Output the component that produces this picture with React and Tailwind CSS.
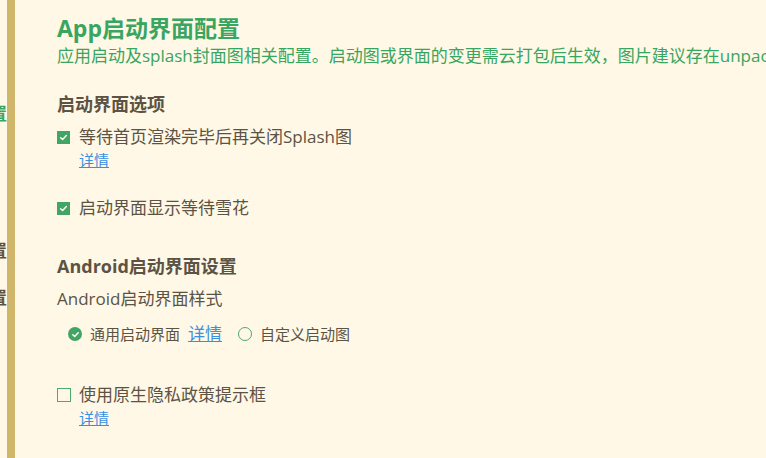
import React from 'react';

const font = { fontFamily: '"Open Sans", "Noto Sans CJK SC", sans-serif' };

function CheckBox({ checked }) {
  if (checked) {
    return (
      <span className="flex h-[13px] w-[13px] shrink-0 items-center justify-center bg-[#43a564]">
        <svg width="9" height="9" viewBox="0 0 10 10" fill="none">
          <path d="M1.8 5.2 4 7.2 8.2 2.8" stroke="#fff" strokeWidth="1.6" strokeLinecap="round" strokeLinejoin="round" />
        </svg>
      </span>
    );
  }
  return <span className="h-[14px] w-[14px] shrink-0 border-[1.5px] border-[#4caa6a]" />;
}

function Radio({ checked }) {
  if (checked) {
    return (
      <span className="flex h-[14px] w-[14px] shrink-0 items-center justify-center rounded-full bg-[#43a564]">
        <svg width="9" height="9" viewBox="0 0 10 10" fill="none">
          <path d="M2 5.2 4.1 7.1 8 3" stroke="#fff" strokeWidth="1.6" strokeLinecap="round" strokeLinejoin="round" />
        </svg>
      </span>
    );
  }
  return <span className="h-[14px] w-[14px] shrink-0 rounded-full border-[1.5px] border-[#4caa6a]" />;
}

function Detail() {
  return (
    <a href="#" className="ml-[22px] block h-[22px] text-[15px] leading-[22px] text-[#3b8fe3] underline">
      详情
    </a>
  );
}

export default function App() {
  return (
    <div className="flex h-[458px] w-[766px] overflow-hidden bg-[#fff8e6]" style={font}>
      <div className="w-[7px] shrink-0 overflow-hidden">
        <div className="flex h-[26px] justify-end mt-[101px] text-[17px] font-bold leading-[26px] whitespace-nowrap text-[#38a560]">启动界面配置</div>
        <div className="flex h-[26px] justify-end mt-[111px] text-[17px] font-bold leading-[26px] whitespace-nowrap text-[#5c5344]">图标配置</div>
        <div className="flex h-[26px] justify-end mt-[21px] text-[17px] font-bold leading-[26px] whitespace-nowrap text-[#5c5344]">模块配置</div>
      </div>
      <div className="w-[8px] shrink-0 bg-[#cfb66b]" />
      <div className="min-w-0 flex-1 pl-[42px] pt-[12px] text-[#5c5344]">
        <h1 className="text-[23px] font-bold leading-[32px] text-[#38a560]">App启动界面配置</h1>
        <p className="whitespace-nowrap text-[17px] leading-[24px] text-[#38a560]">
          应用启动及splash封面图相关配置。启动图或界面的变更需云打包后生效，图片建议存在unpackage目录下
        </p>

        <h2 className="mt-[23px] text-[18px] font-bold leading-[26px]">启动界面选项</h2>
        <label className="mt-[8px] flex h-[24px] items-center gap-[9px] text-[17px] leading-[24px]">
          <CheckBox checked />
          <span>等待首页渲染完毕后再关闭Splash图</span>
        </label>
        <Detail />

        <label className="mt-[25px] flex h-[24px] items-center gap-[9px] text-[17px] leading-[24px]">
          <CheckBox checked />
          <span>启动界面显示等待雪花</span>
        </label>

        <h2 className="mt-[33px] text-[18px] font-bold leading-[26px]">Android启动界面设置</h2>
        <div className="mt-[8px] text-[17px] leading-[24px]">Android启动界面样式</div>
        <div className="ml-[11px] mt-[11px] flex h-[24px] items-center text-[15px] leading-[24px]">
          <label className="flex items-center gap-[8px]">
            <Radio checked />
            <span>通用启动界面</span>
          </label>
          <a href="#" className="ml-[8px] text-[17px] text-[#3b8fe3] underline">详情</a>
          <label className="ml-[16px] flex items-center gap-[8px]">
            <Radio />
            <span>自定义启动图</span>
          </label>
        </div>

        <label className="mt-[37px] flex h-[24px] items-center gap-[8px] text-[17px] leading-[24px]">
          <CheckBox />
          <span>使用原生隐私政策提示框</span>
        </label>
        <Detail />
      </div>
    </div>
  );
}
